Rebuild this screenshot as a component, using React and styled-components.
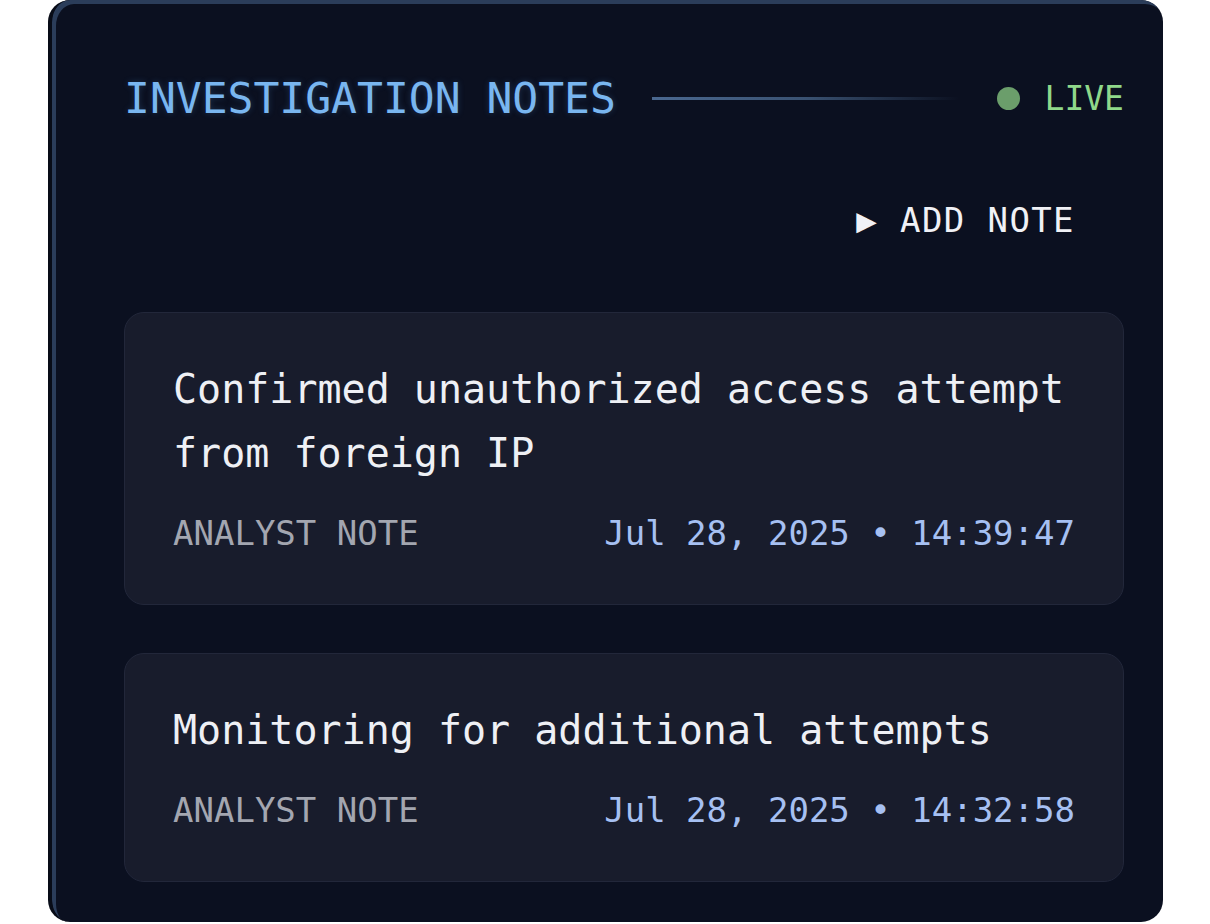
import React from "react";
import styled, { createGlobalStyle } from "styled-components";

const GlobalStyle = createGlobalStyle`
  body {
    margin: 0;
    background: #ffffff;
    font-family: "DejaVu Sans Mono", "Liberation Mono", monospace;
  }
  * {
    box-sizing: border-box;
  }
`;

const Panel = styled.div`
  margin-left: 48px;
  width: 1115px;
  height: 922px;
  background: #0b1020;
  border-left: 4px solid #080c17;
  border-radius: 22px;
  box-shadow: inset 4px 4px 0 #2b3d5a;
  padding: 72px 39px 0 72px;
  display: flex;
  flex-direction: column;
  overflow: hidden;
`;

const Header = styled.div`
  display: flex;
  align-items: center;
  height: 52px;
`;

const Title = styled.h2`
  margin: 0;
  font-size: 43px;
  font-weight: 400;
  line-height: 52px;
  color: #79b6f0;
  text-shadow: 0 0 6px rgba(80, 150, 230, 0.25);
  white-space: nowrap;
`;

const Rule = styled.div`
  flex: 1;
  height: 3px;
  margin: 0 38px 0 36px;
  background: linear-gradient(90deg, #4a6890 0%, #3a5272 50%, rgba(11, 16, 32, 0) 100%);
`;

const Live = styled.div`
  display: flex;
  align-items: center;
  gap: 25px;
  font-size: 33px;
  color: #8fd88a;
`;

const Dot = styled.span`
  width: 23px;
  height: 23px;
  border-radius: 50%;
  background: #6b9e6b;
`;

const Actions = styled.div`
  display: flex;
  justify-content: flex-end;
  margin-top: 57px;
`;

const AddButton = styled.button`
  font-family: inherit;
  font-size: 34px;
  letter-spacing: 1.4px;
  line-height: 41px;
  color: #f0f1f6;
  background: none;
  border: none;
  padding: 19px 49px 20px 20px;
  cursor: pointer;
`;

const NoteList = styled.div`
  display: flex;
  flex-direction: column;
  gap: 48px;
  margin-top: 51px;
`;

const Card = styled.div`
  background: #181c2c;
  border: 1px solid #22273a;
  border-radius: 20px;
  padding: 44px 48px 45px 48px;
`;

const NoteText = styled.div`
  font-size: 40px;
  line-height: 64px;
  color: #eef0f5;
`;

const Meta = styled.div`
  display: flex;
  justify-content: space-between;
  align-items: center;
  margin-top: 22px;
  font-size: 34px;
  line-height: 52px;
`;

const Label = styled.span`
  color: #a3a6b0;
`;

const Stamp = styled.span`
  color: #a6c0f2;
`;

const notes = [
  {
    text: "Confirmed unauthorized access attempt from foreign IP",
    stamp: "Jul 28, 2025 • 14:39:47",
  },
  {
    text: "Monitoring for additional attempts",
    stamp: "Jul 28, 2025 • 14:32:58",
  },
];

export default function App() {
  return (
    <>
      <GlobalStyle />
      <Panel>
        <Header>
          <Title>INVESTIGATION NOTES</Title>
          <Rule />
          <Live>
            <Dot />
            LIVE
          </Live>
        </Header>
        <Actions>
          <AddButton>▶ ADD NOTE</AddButton>
        </Actions>
        <NoteList>
          {notes.map((note, i) => (
            <Card key={i}>
              <NoteText>{note.text}</NoteText>
              <Meta>
                <Label>ANALYST NOTE</Label>
                <Stamp>{note.stamp}</Stamp>
              </Meta>
            </Card>
          ))}
        </NoteList>
      </Panel>
    </>
  );
}
